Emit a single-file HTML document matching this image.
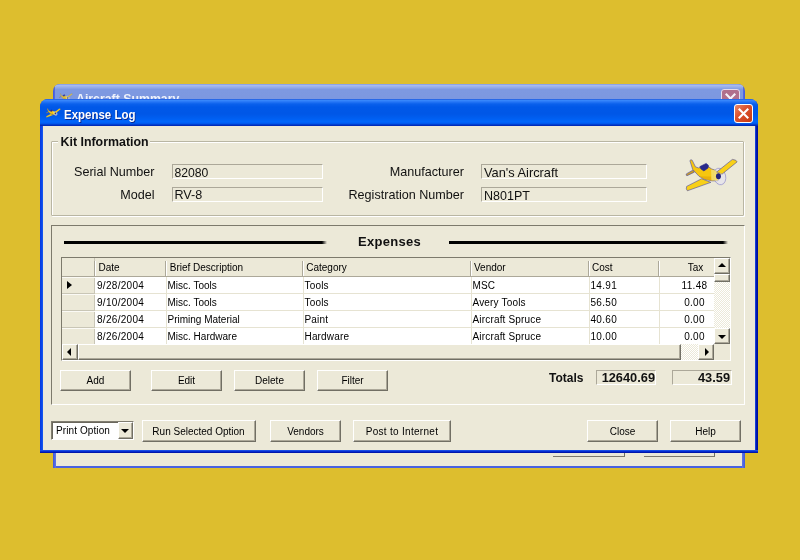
<!DOCTYPE html>
<html>
<head>
<meta charset="utf-8">
<title>Expense Log</title>
<style>
html,body{margin:0;padding:0;}
body{width:800px;height:560px;overflow:hidden;background:#ddbe2e;position:relative;font-family:"Liberation Sans",sans-serif;color:#000;}
.abs,.abs *{position:absolute;box-sizing:border-box;}
.abs{left:0;top:0;}
.t{white-space:nowrap;line-height:1;}
/* back window */
#bw{left:53px;top:84px;will-change:transform;width:692px;height:384.3px;background:linear-gradient(90deg,#4058dc 0,#5a72e6 2.5px,#5a72e6 689.5px,#4058dc 692px);border-radius:7px 7px 0 0;overflow:hidden;}
#bw .tb{left:2px;top:0;width:688px;height:30px;background:linear-gradient(#8098e4 0,#a6baee 1.5px,#98aeea 3px,#7e99e1 5.5px,#7a96df 100%);}
#bw .body{left:2.6px;top:27px;width:686.8px;height:355px;background:#ece9d8;box-shadow:0 2px 0 #4a62e0;}
#bw .ttl{left:23px;top:7.6px;font-size:13.5px;font-weight:bold;color:#eef2fc;transform:scaleX(0.912);transform-origin:0 0;}
#bw .cb{left:668.4px;top:5px;width:19px;height:19px;border-radius:3px;border:1px solid #e4dcec;background:#b06f8c;}
.bbtn{background:#ece9d8;border-right:1px solid #716f64;border-bottom:1.5px solid #7d7a6e;}
/* front window */
#fw{left:40px;top:99px;will-change:transform;width:718px;height:354px;background:#0831d9;border-radius:8px 8px 0 0;overflow:hidden;
 background:linear-gradient(90deg,#0a36dc 0,#0844e8 1.2px,#0a4cec 2.2px,#2a62ea 3px,#2a62ea 715px,#0c30cc 715.7px,#0016ac 716.6px,#000c94 718px);}
#fw .tb{left:0;top:0;width:718px;height:27px;background:linear-gradient(#1c50d8 0,#3a8afc 1.2px,#2a7af8 2.5px,#0a60ec 5px,#0058e8 8px,#0057e7 15px,#005ef0 19px,#0066fc 23px,#0058ec 24.5px,#0034c4 26px,#0024b0 27px);}
#fw .bot{left:0;top:351px;width:718px;height:3px;background:linear-gradient(#2a62ea 0,#0a38dc 1px,#0020c4 2px,#000c94 3px);}
#fw .body{left:3px;top:27px;width:712px;height:324px;background:#ece9d8;}
#fw .ttl{left:23.6px;top:8.5px;transform:scaleX(0.85);transform-origin:0 0;font-size:13.5px;font-weight:bold;color:#fff;text-shadow:1px 1px 0 #0a2a90;}
#fw .cb{left:693.5px;top:5px;width:19px;height:19px;border-radius:3px;border:1px solid #fff;background:linear-gradient(135deg,#e88c6c 0,#dc5430 40%,#c83810 100%);}
/* controls */
.grp{border:1px solid #b9b6a3;border-radius:1px;box-shadow:1px 1px 0 #fff, inset 1px 1px 0 #fff;}
.fld{border:1px solid;border-color:#aca899 #fff #fff #aca899;}
.lbl{font-size:12.6px;color:#111;}
.btn{border:1px solid;border-color:#fff #716f64 #716f64 #fff;box-shadow:inset -1px -1px 0 #aca899;font-size:10px;text-align:center;line-height:20px;}
.g{font-size:10px;color:#000;}
.b2{line-height:21.5px;}
.hd{background:#ece9d8;}
.d{letter-spacing:0.3px;}
.w{letter-spacing:0.17px;}
.sbt{background:#f6f5ee;background-image:conic-gradient(#ece9d8 25%,#fff 0 50%,#ece9d8 0 75%,#fff 0);background-size:2px 2px;}
.sbb{background:#ece9d8;border:1px solid;border-color:#fff #716f64 #716f64 #fff;box-shadow:inset -1px -1px 0 #aca899;}
#ct{left:0;top:0;width:800px;height:560px;will-change:transform;transform:translateZ(0);}
</style>
</head>
<body>
<div class="abs">

<svg width="0" height="0" style="left:0;top:0;"><defs><g id="pl">
    <g stroke="#4848a0" stroke-width="8" stroke-linejoin="round">
      <path d="M150 212 L58 265 Q50 285 66 290 L165 242 Z" fill="#c89c28"/>
      <path d="M105 88 Q118 68 135 82 L180 172 L222 186 L330 150 L392 198 L445 218 L500 262 L512 310 L478 358 L400 358 L300 338 L228 298 L142 205 Z" fill="#f6c610"/>
      <path d="M238 168 L322 125 L352 150 L348 186 L292 226 L252 200 Z" fill="#2a2a8c" stroke="#2a2a8c"/>
      <path d="M262 330 L62 432 Q48 470 72 490 L385 378 Z" fill="#f8d018"/>
    </g>
    <path d="M228 298 L300 338 L400 358 L385 300 Z" fill="#e6a808" fill-opacity="0.7"/>
    <ellipse cx="502" cy="300" rx="80" ry="112" fill="#e4e2f4" fill-opacity="0.62" stroke="#8884c8" stroke-width="8" transform="rotate(-14 502 300)"/>
    <path d="M388 205 L445 220 L492 258 L470 352 L392 350 Z" fill="#f4de68" fill-opacity="0.9"/>
    <path d="M462 240 L672 72 Q730 78 735 105 L535 268 Z" fill="#f8d018" stroke="#4848a0" stroke-width="8" stroke-linejoin="round"/>
    <path d="M470 246 L530 262 L500 290 Z" fill="#f4de68"/>
    <ellipse cx="486" cy="298" rx="33" ry="40" fill="#24247a"/>
</g></defs></svg>
<!-- background (inactive) window -->
<div id="bw">
  <div class="tb"></div>
  <div class="body"></div>
  <svg style="left:4.5px;top:7.5px;opacity:.8" width="16" height="11.2" viewBox="0 0 800 560"><use href="#pl"/></svg>
  <div class="t ttl">Aircraft Summary</div>
  <div class="cb"><svg style="left:0;top:0;" width="17" height="17" viewBox="0 0 17 17"><path d="M4.5 4.5 L12.5 12.5 M12.5 4.5 L4.5 12.5" stroke="#f4f0f8" stroke-width="2.1" stroke-linecap="square" fill="none"/></svg></div>
  <div class="bbtn" style="left:500px;top:352px;width:72px;height:21px;"></div>
  <div class="bbtn" style="left:591px;top:352px;width:71px;height:21px;"></div>
</div>

<!-- front (active) window -->
<div id="fw">
  <div class="tb"></div>
  <div class="bot"></div>
  <div class="body"></div>
  <svg style="left:4.5px;top:8px;" width="17" height="11.9" viewBox="0 0 800 560"><use href="#pl"/></svg>
  <div class="t ttl">Expense Log</div>
  <div class="cb"><svg style="left:0;top:0;" width="17" height="17" viewBox="0 0 17 17"><path d="M4.5 4.5 L12.5 12.5 M12.5 4.5 L4.5 12.5" stroke="#fff" stroke-width="2.1" stroke-linecap="square" fill="none"/></svg></div>
</div>


<!-- front window content (page coordinates) -->
<div id="ct">
  <!-- Kit Information group -->
  <div class="grp" style="left:51px;top:140.5px;width:693px;height:75px;"></div>
  <div class="t" style="left:58px;top:134px;width:92px;height:14px;background:#ece9d8;"></div>
  <div class="t" id="kit" style="left:60.5px;top:135.5px;font-size:12.4px;font-weight:bold;color:#111;">Kit Information</div>

  <div class="t lbl" id="l1" style="right:645.5px;top:166px;">Serial Number</div>
  <div class="t lbl" id="l2" style="right:645.5px;top:188.7px;">Model</div>
  <div class="t lbl" id="l3" style="right:336px;top:166px;">Manufacturer</div>
  <div class="t lbl" id="l4" style="right:336px;top:188.7px;">Registration Number</div>

  <div class="fld" style="left:171.5px;top:164px;width:151.5px;height:15px;"></div>
  <div class="fld" style="left:171.5px;top:187px;width:151.5px;height:15px;"></div>
  <div class="fld" style="left:480.5px;top:164px;width:166.5px;height:15px;"></div>
  <div class="fld" style="left:480.5px;top:187px;width:166.5px;height:15px;"></div>
  <div class="t" id="f1" style="left:174.5px;top:166.6px;font-size:12.2px;color:#111;">82080</div>
  <div class="t" id="f2" style="left:174.5px;top:189.4px;font-size:12.6px;color:#111;">RV-8</div>
  <div class="t" id="f3" style="left:484px;top:167.2px;font-size:12.8px;color:#111;">Van's Aircraft</div>
  <div class="t" id="f4" style="left:484px;top:190.1px;font-size:12.5px;color:#111;">N801PT</div>

  <!-- plane icon -->
  <svg id="plane" style="left:682px;top:154px;" width="60" height="42" viewBox="0 0 800 560"><use href="#pl"/></svg>

  <!-- Expenses panel -->
  <div style="left:51.3px;top:225px;width:693.7px;height:180px;border:1px solid;border-width:1.4px 1px 1px 1.4px;border-color:#7d7a6c #fff #fff #7d7a6c;"></div>
  <div style="left:64px;top:241px;width:263px;height:3px;background:linear-gradient(90deg,#000 0,#000 258px,rgba(0,0,0,0) 263px);"></div>
  <div style="left:449px;top:241px;width:279px;height:3px;background:linear-gradient(90deg,#000 0,#000 274px,rgba(0,0,0,0) 279px);"></div>
  <div class="t" id="exp" style="left:358px;top:235px;font-size:13px;font-weight:bold;color:#111;letter-spacing:0.3px;">Expenses</div>

  <!-- grid -->
  <div id="grid" style="left:61px;top:257px;width:670px;height:104px;background:#fff;border:1px solid;border-color:#7d7a6c #fff #fff #7d7a6c;overflow:hidden;">
    <!-- header row -->
    <div class="hd" style="left:0;top:0;width:668px;height:19px;border-bottom:1px solid #aca899;"></div>
    <!-- row selector column -->
    <div class="hd" style="left:0;top:0;width:33px;height:86px;border-right:1px solid #c9c6b6;"></div>
    <!-- row lines -->
    <div style="left:0;top:35px;width:652px;height:1px;background:#e6e3d2;"></div>
    <div style="left:0;top:52px;width:652px;height:1px;background:#e6e3d2;"></div>
    <div style="left:0;top:69px;width:652px;height:1px;background:#e6e3d2;"></div>
    <div style="left:0;top:18px;width:33px;height:1px;background:#aca899;"></div>
    <div style="left:0;top:35px;width:33px;height:1px;background:#c9c6b6;"></div>
    <div style="left:0;top:52px;width:33px;height:1px;background:#c9c6b6;"></div>
    <div style="left:0;top:69px;width:33px;height:1px;background:#c9c6b6;"></div>
    <div style="left:0;top:19px;width:33px;height:1px;background:#fbfaf5;"></div>
    <div style="left:0;top:36px;width:33px;height:1px;background:#fbfaf5;"></div>
    <div style="left:0;top:53px;width:33px;height:1px;background:#fbfaf5;"></div>
    <div style="left:0;top:70px;width:33px;height:1px;background:#fbfaf5;"></div>
    <!-- column lines (body) -->
    <div style="left:104px;top:19px;width:1px;height:67px;background:#e6e3d2;"></div>
    <div style="left:241px;top:19px;width:1px;height:67px;background:#e6e3d2;"></div>
    <div style="left:409px;top:19px;width:1px;height:67px;background:#e6e3d2;"></div>
    <div style="left:527px;top:19px;width:1px;height:67px;background:#e6e3d2;"></div>
    <div style="left:596.5px;top:19px;width:1px;height:67px;background:#e6e3d2;"></div>
    <!-- column lines (header) -->
    <div style="left:32px;top:3px;width:2px;height:15px;background:linear-gradient(90deg,#aca899 50%,#fff 50%);"></div>
    <div style="left:103px;top:3px;width:2px;height:15px;background:linear-gradient(90deg,#aca899 50%,#fff 50%);"></div>
    <div style="left:240px;top:3px;width:2px;height:15px;background:linear-gradient(90deg,#aca899 50%,#fff 50%);"></div>
    <div style="left:408px;top:3px;width:2px;height:15px;background:linear-gradient(90deg,#aca899 50%,#fff 50%);"></div>
    <div style="left:526px;top:3px;width:2px;height:15px;background:linear-gradient(90deg,#aca899 50%,#fff 50%);"></div>
    <div style="left:596.3px;top:3px;width:2px;height:15px;background:linear-gradient(90deg,#aca899 50%,#fff 50%);"></div>
    <!-- header text -->
    <div class="t g" style="left:36.5px;top:5px;">Date</div>
    <div class="t g" style="left:107.75px;top:5px;">Brief Description</div>
    <div class="t g" style="left:244.25px;top:5px;">Category</div>
    <div class="t g" style="left:412px;top:5px;">Vendor</div>
    <div class="t g" style="left:530px;top:5px;">Cost</div>
    <div class="t g" style="left:598.5px;top:5px;width:70px;text-align:center;">Tax</div>
    <!-- row selector arrow -->
    <div style="left:5px;top:23px;width:0;height:0;border-left:5px solid #000;border-top:4.5px solid transparent;border-bottom:4.5px solid transparent;"></div>
    <!-- rows -->
    <div class="t g d" style="left:35px;top:23px;">9/28/2004</div>
    <div class="t g" style="left:105.5px;top:23px;">Misc. Tools</div>
    <div class="t g w" style="left:242.5px;top:23px;">Tools</div>
    <div class="t g w" style="left:410.5px;top:23px;">MSC</div>
    <div class="t g d" style="left:528.5px;top:23px;">14.91</div>
    <div class="t g d" style="left:597.5px;top:23px;width:70px;text-align:center;">11.48</div>

    <div class="t g d" style="left:35px;top:40px;">9/10/2004</div>
    <div class="t g" style="left:105.5px;top:40px;">Misc. Tools</div>
    <div class="t g w" style="left:242.5px;top:40px;">Tools</div>
    <div class="t g w" style="left:410.5px;top:40px;">Avery Tools</div>
    <div class="t g d" style="left:528.5px;top:40px;">56.50</div>
    <div class="t g d" style="left:597.5px;top:40px;width:70px;text-align:center;">0.00</div>

    <div class="t g d" style="left:35px;top:57px;">8/26/2004</div>
    <div class="t g" style="left:105.5px;top:57px;">Priming Material</div>
    <div class="t g w" style="left:242.5px;top:57px;">Paint</div>
    <div class="t g w" style="left:410.5px;top:57px;">Aircraft Spruce</div>
    <div class="t g d" style="left:528.5px;top:57px;">40.60</div>
    <div class="t g d" style="left:597.5px;top:57px;width:70px;text-align:center;">0.00</div>

    <div class="t g d" style="left:35px;top:74px;">8/26/2004</div>
    <div class="t g" style="left:105.5px;top:74px;">Misc. Hardware</div>
    <div class="t g w" style="left:242.5px;top:74px;">Hardware</div>
    <div class="t g w" style="left:410.5px;top:74px;">Aircraft Spruce</div>
    <div class="t g d" style="left:528.5px;top:74px;">10.00</div>
    <div class="t g d" style="left:597.5px;top:74px;width:70px;text-align:center;">0.00</div>

    <!-- vertical scrollbar -->
    <div class="sbt" style="left:652px;top:0;width:16px;height:86px;"></div>
    <div class="sbb" style="left:652px;top:0;width:16px;height:15.5px;"></div>
    <div class="sbb" style="left:652px;top:15.5px;width:16px;height:8.5px;"></div>
    <div class="sbb" style="left:652px;top:70px;width:16px;height:16px;"></div>
    <div style="left:656px;top:5px;width:0;height:0;border-bottom:4px solid #000;border-left:4px solid transparent;border-right:4px solid transparent;"></div>
    <div style="left:656px;top:77px;width:0;height:0;border-top:4px solid #000;border-left:4px solid transparent;border-right:4px solid transparent;"></div>
    <!-- horizontal scrollbar -->
    <div class="sbt" style="left:0;top:86px;width:652px;height:16px;"></div>
    <div class="sbb" style="left:0;top:86px;width:16px;height:16px;"></div>
    <div class="sbb" style="left:16px;top:86px;width:603px;height:16px;"></div>
    <div class="sbb" style="left:636px;top:86px;width:16px;height:16px;"></div>
    <div style="left:5px;top:90px;width:0;height:0;border-right:4px solid #000;border-top:4px solid transparent;border-bottom:4px solid transparent;"></div>
    <div style="left:643px;top:90px;width:0;height:0;border-left:4px solid #000;border-top:4px solid transparent;border-bottom:4px solid transparent;"></div>
    <div class="hd" style="left:652px;top:86px;width:16px;height:16px;"></div>
  </div>

  <!-- grid buttons -->
  <div class="btn" style="left:60px;top:369.5px;width:71px;height:21.5px;">Add</div>
  <div class="btn" style="left:151px;top:369.5px;width:71px;height:21.5px;">Edit</div>
  <div class="btn" style="left:234px;top:369.5px;width:71px;height:21.5px;">Delete</div>
  <div class="btn" style="left:317px;top:369.5px;width:71px;height:21.5px;">Filter</div>

  <!-- totals -->
  <div class="t" id="tot" style="left:549px;top:372px;font-size:12px;font-weight:bold;color:#111;">Totals</div>
  <div class="fld" style="left:596px;top:369.6px;width:60px;height:15px;"></div>
  <div class="fld" style="left:672px;top:369.6px;width:60px;height:15px;"></div>
  <div class="t" id="t1" style="right:145px;top:371.6px;font-size:12.8px;font-weight:bold;color:#111;">12640.69</div>
  <div class="t" id="t2" style="right:70px;top:371.6px;font-size:12.8px;font-weight:bold;color:#111;">43.59</div>

  <!-- bottom row -->
  <div style="left:51px;top:421px;width:83px;height:18.5px;background:#fff;border:1px solid;border-color:#807d70 #fff #fff #807d70;box-shadow:inset 1px 1px 0 #6a675c;"></div>
  <div class="t g" style="left:56px;top:426px;letter-spacing:0.1px;">Print Option</div>
  <div class="sbb" style="left:117.5px;top:422px;width:15px;height:16.5px;"></div>
  <div style="left:121px;top:428.5px;width:0;height:0;border-top:4px solid #000;border-left:4px solid transparent;border-right:4px solid transparent;"></div>

  <div class="btn b2" style="left:141.5px;top:420px;width:114px;height:22px;">Run Selected Option</div>
  <div class="btn b2" style="left:270px;top:420px;width:71px;height:22px;">Vendors</div>
  <div class="btn b2" style="left:353px;top:420px;width:98px;height:22px;" ><span style="position:static;letter-spacing:0.3px;">Post to Internet</span></div>
  <div class="btn b2" style="left:587px;top:420px;width:71px;height:22px;">Close</div>
  <div class="btn b2" style="left:670px;top:420px;width:71px;height:22px;">Help</div>
</div>

</div>
</body>
</html>
